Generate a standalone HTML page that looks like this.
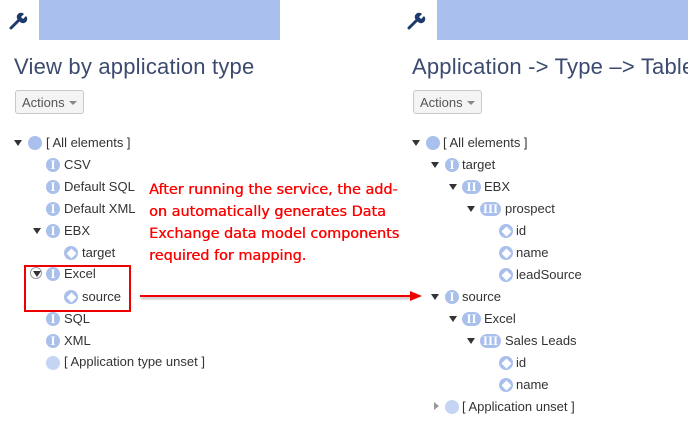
<!DOCTYPE html>
<html><head><meta charset="utf-8"><style>
body{margin:0;width:688px;height:432px;background:#fff;position:relative;overflow:hidden;font-family:"Liberation Sans",sans-serif}
.a{position:absolute}
.bar{position:absolute;top:0;height:40px;background:#a9c0ee}
.title{position:absolute;top:54px;font-size:22px;color:#3b4a6e;letter-spacing:0.2px;white-space:nowrap}
.btn{position:absolute;top:90px;width:66px;height:24px;border:1px solid #c8c8c8;border-radius:3px;background:#f4f4f4;font-size:13px;color:#555;line-height:24px;box-sizing:border-box;padding-left:6px}
.btn:after{content:"";position:absolute;right:6px;top:10px;border-left:4px solid transparent;border-right:4px solid transparent;border-top:4px solid #888}
.t{position:absolute;font-size:13px;color:#333;line-height:18px;height:18px;white-space:nowrap}
.tri{position:absolute;width:0;height:0;border-left:4px solid transparent;border-right:4px solid transparent;border-top:6px solid #333}
.c{position:absolute;width:14px;height:14px;border-radius:7px;background:#a9c0ec}
.p{position:absolute;height:14px;border-radius:7px;background:#a9c0ec;color:#fff;font-family:"Liberation Serif",serif;font-weight:bold;font-size:13px;line-height:14px;text-align:center}
.d{position:absolute;width:14px;height:14px;border-radius:7px;background:#a9c0ec}
.d:after{content:"";position:absolute;left:3.5px;top:3.5px;width:7px;height:7px;background:#fff;transform:rotate(45deg)}
.red{position:absolute;left:149px;top:179px;line-height:22px;color:#f00;font-family:"DejaVu Sans",sans-serif;font-size:14.4px;text-shadow:0.4px 0 0 #f00}
</style></head><body>
<div class="bar" style="left:39px;width:241px"></div>
<div class="bar" style="left:437px;width:251px"></div>
<svg class="a" style="left:8px;top:11px" width="22" height="20" viewBox="0 0 22 20"><path d="M3 17 L11 9" stroke="#1d3a6e" stroke-width="3" stroke-linecap="round"/><path d="M10 9 A4 4 0 1 1 16 3 L13 6 L15 8 L18 5 A4 4 0 0 1 12 11 Z" fill="#1d3a6e"/></svg>
<svg class="a" style="left:406px;top:11px" width="22" height="20" viewBox="0 0 22 20"><path d="M3 17 L11 9" stroke="#1d3a6e" stroke-width="3" stroke-linecap="round"/><path d="M10 9 A4 4 0 1 1 16 3 L13 6 L15 8 L18 5 A4 4 0 0 1 12 11 Z" fill="#1d3a6e"/></svg>
<div class="title" style="left:14px">View by application type</div>
<div class="title" style="left:412px">Application -&gt; Type –&gt; Table</div>
<div class="btn" style="left:15px;width:69px">Actions</div>
<div class="btn" style="left:413px;width:69px">Actions</div>

<div class="tri" style="left:14px;top:140px"></div><div class="c" style="left:28px;top:136px"></div><div class="t" style="left:46px;top:134px">[ All elements ]</div>
<div class="p" style="left:46px;top:158px;width:14px">I</div><div class="t" style="left:64px;top:156px">CSV</div>
<div class="p" style="left:46px;top:180px;width:14px">I</div><div class="t" style="left:64px;top:178px">Default SQL</div>
<div class="p" style="left:46px;top:202px;width:14px">I</div><div class="t" style="left:64px;top:200px">Default XML</div>
<div class="tri" style="left:33px;top:228px"></div><div class="p" style="left:46px;top:224px;width:14px">I</div><div class="t" style="left:64px;top:222px">EBX</div>
<div class="d" style="left:64px;top:246px"></div><div class="t" style="left:82px;top:244px">target</div>
<div class="a" style="left:30px;top:267px;width:10px;height:10px;border:1px solid #99a;border-radius:6px"></div><div class="tri" style="left:33px;top:271px"></div><div class="p" style="left:46px;top:267px;width:14px">I</div><div class="t" style="left:64px;top:265px">Excel</div>
<div class="d" style="left:64px;top:290px"></div><div class="t" style="left:82px;top:288px">source</div>
<div class="p" style="left:46px;top:312px;width:14px">I</div><div class="t" style="left:64px;top:310px">SQL</div>
<div class="p" style="left:46px;top:334px;width:14px">I</div><div class="t" style="left:64px;top:332px">XML</div>
<div class="c" style="left:46px;top:356px;background:#c5d4f2"></div><div class="t" style="left:64px;top:353px">[ Application type unset ]</div>
<div class="a" style="left:24px;top:265px;width:103px;height:43px;border:2px solid #e00"></div>

<div class="red">After running the service, the add-<br>on automatically generates Data<br>Exchange data model components<br>required for mapping.</div>
<div class="a" style="left:140px;top:295px;width:272px;height:2px;background:#e00;box-shadow:1px 2px 2px rgba(0,0,0,.3)"></div>
<div class="a" style="left:410px;top:291px;width:0;height:0;border-top:5px solid transparent;border-bottom:5px solid transparent;border-left:12px solid #e00"></div>

<div class="tri" style="left:412px;top:140px"></div><div class="c" style="left:426px;top:136px"></div><div class="t" style="left:443px;top:134px">[ All elements ]</div>
<div class="tri" style="left:431px;top:162px"></div><div class="p" style="left:445px;top:158px;width:14px">I</div><div class="t" style="left:462px;top:156px">target</div>
<div class="tri" style="left:449px;top:184px"></div><div class="p" style="left:462px;top:180px;width:19px">II</div><div class="t" style="left:484px;top:178px">EBX</div>
<div class="tri" style="left:467px;top:206px"></div><div class="p" style="left:480px;top:202px;width:21px">III</div><div class="t" style="left:505px;top:200px">prospect</div>
<div class="d" style="left:499px;top:224px"></div><div class="t" style="left:516px;top:222px">id</div>
<div class="d" style="left:499px;top:246px"></div><div class="t" style="left:516px;top:244px">name</div>
<div class="d" style="left:499px;top:268px"></div><div class="t" style="left:516px;top:266px">leadSource</div>
<div class="tri" style="left:431px;top:294px"></div><div class="p" style="left:445px;top:290px;width:14px">I</div><div class="t" style="left:462px;top:288px">source</div>
<div class="tri" style="left:449px;top:316px"></div><div class="p" style="left:462px;top:312px;width:19px">II</div><div class="t" style="left:484px;top:310px">Excel</div>
<div class="tri" style="left:467px;top:338px"></div><div class="p" style="left:480px;top:334px;width:21px">III</div><div class="t" style="left:505px;top:332px">Sales Leads</div>
<div class="d" style="left:499px;top:356px"></div><div class="t" style="left:516px;top:354px">id</div>
<div class="d" style="left:499px;top:378px"></div><div class="t" style="left:516px;top:376px">name</div>
<div class="a" style="left:434px;top:402px;width:0;height:0;border-top:4px solid transparent;border-bottom:4px solid transparent;border-left:5px solid #999"></div><div class="c" style="left:445px;top:400px;background:#c5d4f2"></div><div class="t" style="left:462px;top:398px">[ Application unset ]</div>
</body></html>
